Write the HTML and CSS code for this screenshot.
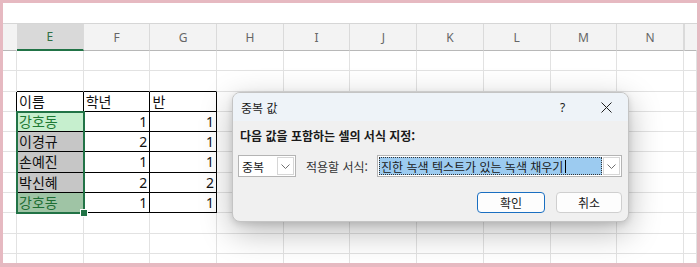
FILE: index.html
```html
<!DOCTYPE html>
<html lang="ko">
<head>
  <meta charset="UTF-8">
  <title>중복 값</title>
  <link rel="stylesheet" href="styles.css">
</head>
<body>
  <div class="frame">
    <div class="topbar"></div>
    <div class="sheet">
      <div class="hd lead"></div><div class="hd sel">E</div><div class="hd">F</div><div class="hd">G</div><div class="hd">H</div><div class="hd">I</div><div class="hd">J</div><div class="hd">K</div><div class="hd">L</div><div class="hd">M</div><div class="hd">N</div><div class="hd rest"></div>

      <div class="c"></div><div class="c"></div><div class="c"></div><div class="c"></div><div class="c"></div><div class="c"></div><div class="c"></div><div class="c"></div><div class="c"></div><div class="c"></div><div class="c"></div><div class="c"></div>
      <div class="c"></div><div class="c bb"></div><div class="c bb"></div><div class="c bb"></div><div class="c"></div><div class="c"></div><div class="c"></div><div class="c"></div><div class="c"></div><div class="c"></div><div class="c"></div><div class="c"></div>
      <div class="c br"></div><div class="c t">이름</div><div class="c t">학년</div><div class="c t">반</div><div class="c"></div><div class="c"></div><div class="c"></div><div class="c"></div><div class="c"></div><div class="c"></div><div class="c"></div><div class="c"></div>
      <div class="c br"></div><div class="c t good">강호동</div><div class="c t n">1</div><div class="c t n">1</div><div class="c"></div><div class="c"></div><div class="c"></div><div class="c"></div><div class="c"></div><div class="c"></div><div class="c"></div><div class="c"></div>
      <div class="c br"></div><div class="c t tint">이경규</div><div class="c t n">2</div><div class="c t n">1</div><div class="c"></div><div class="c"></div><div class="c"></div><div class="c"></div><div class="c"></div><div class="c"></div><div class="c"></div><div class="c"></div>
      <div class="c br"></div><div class="c t tint">손예진</div><div class="c t n">1</div><div class="c t n">1</div><div class="c"></div><div class="c"></div><div class="c"></div><div class="c"></div><div class="c"></div><div class="c"></div><div class="c"></div><div class="c"></div>
      <div class="c br"></div><div class="c t tint">박신혜</div><div class="c t n">2</div><div class="c t n">2</div><div class="c"></div><div class="c"></div><div class="c"></div><div class="c"></div><div class="c"></div><div class="c"></div><div class="c"></div><div class="c"></div>
      <div class="c br"></div><div class="c t good-tint">강호동</div><div class="c t n">1</div><div class="c t n">1</div><div class="c"></div><div class="c"></div><div class="c"></div><div class="c"></div><div class="c"></div><div class="c"></div><div class="c"></div><div class="c"></div>
      <div class="c"></div><div class="c"></div><div class="c"></div><div class="c"></div><div class="c"></div><div class="c"></div><div class="c"></div><div class="c"></div><div class="c"></div><div class="c"></div><div class="c"></div><div class="c"></div>
      <div class="c"></div><div class="c"></div><div class="c"></div><div class="c"></div><div class="c"></div><div class="c"></div><div class="c"></div><div class="c"></div><div class="c"></div><div class="c"></div><div class="c"></div><div class="c"></div>
      <div class="c"></div><div class="c"></div><div class="c"></div><div class="c"></div><div class="c"></div><div class="c"></div><div class="c"></div><div class="c"></div><div class="c"></div><div class="c"></div><div class="c"></div><div class="c"></div>

      <div class="selection"><span class="handle"></span></div>
    </div>

    <div class="dialog">
      <div class="dlg-title">
        <span>중복 값</span>
        <span class="help">?</span>
        <span class="close">
          <svg width="11" height="11" viewBox="0 0 11 11"><path d="M0.5 0.5 L10.5 10.5 M10.5 0.5 L0.5 10.5" stroke="#1f1f1f" stroke-width="1" fill="none"/></svg>
        </span>
      </div>
      <div class="dlg-body">
        <div class="dlg-heading">다음 값을 포함하는 셀의 서식 지정:</div>
        <div class="dlg-row">
          <div class="combo small">
            <span class="combo-text">중복</span>
            <span class="drop"><svg width="9" height="5" viewBox="0 0 9 5"><polyline points="0.5,0.5 4.5,4.5 8.5,0.5" stroke="#707070" fill="none"/></svg></span>
          </div>
          <span class="label">적용할 서식:</span>
          <div class="combo wide">
            <span class="combo-text picked">진한 녹색 텍스트가 있는 녹색 채우기<i class="caret"></i></span>
            <span class="drop"><svg width="9" height="5" viewBox="0 0 9 5"><polyline points="0.5,0.5 4.5,4.5 8.5,0.5" stroke="#707070" fill="none"/></svg></span>
          </div>
        </div>
        <div class="dlg-buttons">
          <button class="btn primary">확인</button>
          <button class="btn">취소</button>
        </div>
      </div>
    </div>
  </div>
</body>
</html>
```

FILE: styles.css
```css
html, body {
  margin: 0;
  padding: 0;
  background: #e6b9c1;
}
.frame {
  position: relative;
  width: 694px;
  height: 260px;
  margin: 3px 3px 4px 3px;
  background: #fff;
  overflow: hidden;
  font-family: "Noto Sans CJK KR", "Noto Sans", sans-serif;
}
.topbar {
  height: 21px;
  border-bottom: 1px solid #d6d6d6;
  box-sizing: border-box;
}
.sheet {
  position: relative;
  display: grid;
  grid-template-columns: 14px repeat(10, 66.7px) 1fr;
  grid-template-rows: 27px repeat(11, 20.3px);
}
.hd {
  background: #f3f3f3;
  border-right: 1px solid #dadada;
  border-bottom: 1px solid #b8b8b8;
  box-sizing: border-box;
  display: flex;
  align-items: center;
  justify-content: center;
  font-family: "Noto Sans", sans-serif;
  font-size: 12px;
  color: #666;
}
.hd.lead, .hd.rest {
  border-right-color: #f3f3f3;
}
.hd.rest {
  border-left: 1px solid #dadada;
}
.hd.sel {
  background: #d9d9d9;
  color: #2f6f45;
  border-bottom: 2px solid #217346;
}
.c {
  border-right: 1px solid #e2e2e2;
  border-bottom: 1px solid #e2e2e2;
  box-sizing: border-box;
  font-size: 14px;
  line-height: 19px;
  padding: 0 2px;
  color: #111;
  white-space: nowrap;
}
.bb {
  border-bottom-color: #000;
}
.br {
  border-right-color: #000;
}
.t {
  border-right-color: #000;
  border-bottom-color: #000;
}
.n {
  text-align: right;
  font-family: "Noto Sans", sans-serif;
  font-size: 14px;
}
.good {
  background: #c6efce;
  color: #1f7a35;
}
.tint {
  background: #c6c6c6;
}
.good-tint {
  background: #9fc4a5;
  color: #1f6e34;
}
.selection {
  position: absolute;
  left: 13px;
  top: 87.4px;
  width: 68.7px;
  height: 102.5px;
  border: 2px solid #217346;
  box-sizing: border-box;
  pointer-events: none;
}
.handle {
  position: absolute;
  right: -5px;
  bottom: -5px;
  width: 6px;
  height: 6px;
  background: #217346;
  border: 1px solid #fff;
}
.dialog {
  position: absolute;
  left: 229px;
  top: 89px;
  width: 397px;
  height: 130px;
  box-sizing: border-box;
  border: 1px solid #c4c4c4;
  border-radius: 8px;
  background: #f0f0f0;
  box-shadow: 0 10px 32px rgba(0, 0, 0, 0.28), 0 2px 6px rgba(0, 0, 0, 0.12);
  overflow: hidden;
  font-size: 12px;
  color: #1a1a1a;
}
.dlg-title {
  height: 28px;
  background: #eef3f8;
  display: flex;
  align-items: center;
  padding-left: 8px;
}
.help {
  margin-left: auto;
  width: 12px;
  font-family: "Noto Sans", sans-serif;
  font-size: 12px;
}
.close {
  width: 11px;
  height: 11px;
  display: flex;
  margin: 0 16px 0 29px;
}
.dlg-body {
  padding: 7px 6px 0 5px;
}
.dlg-heading {
  font-weight: bold;
  font-size: 12px;
  line-height: 15px;
  padding-left: 2px;
}
.dlg-row {
  display: flex;
  align-items: center;
  margin-top: 12px;
  height: 22px;
}
.combo {
  display: flex;
  align-items: stretch;
  height: 22px;
  box-sizing: border-box;
  border: 1px solid #b4b4b4;
  background: #fff;
}
.combo.small {
  width: 58px;
}
.combo.wide {
  width: 245px;
  margin-left: auto;
}
.combo-text {
  flex: 1;
  display: flex;
  align-items: center;
  padding-left: 3px;
  white-space: nowrap;
}
.combo-text.picked {
  margin: 1px 0 1px 1px;
  padding-left: 2px;
  background: #9ccbf0;
  outline: 1px dotted #333;
  outline-offset: -1px;
}
.caret {
  display: inline-block;
  width: 1px;
  height: 13px;
  background: #000;
  margin-left: 2px;
}
.drop {
  width: 15px;
  margin: 1px;
  border: 1px solid #d6d6d6;
  display: flex;
  align-items: center;
  justify-content: center;
}
.label {
  margin-left: 10px;
  color: #333;
}
.dlg-buttons {
  display: flex;
  justify-content: flex-end;
  gap: 11px;
  margin-top: 15px;
}
.btn {
  width: 66px;
  height: 21px;
  padding: 0;
  font-family: "Noto Sans CJK KR", sans-serif;
  font-size: 12px;
  color: #1a1a1a;
  background: #fdfdfd;
  border: 1px solid #cfcfcf;
  border-radius: 4px;
}
.btn.primary {
  width: 68px;
  border: 1.5px solid #1a6fc1;
}
```
